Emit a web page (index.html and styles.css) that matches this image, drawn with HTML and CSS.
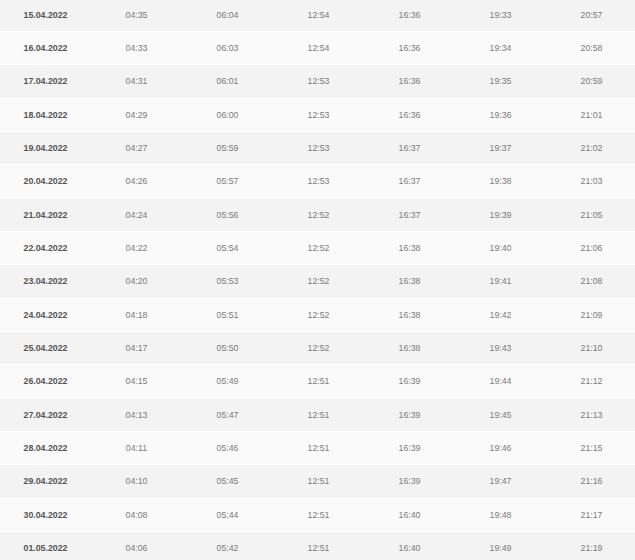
FILE: index.html
```html
<!DOCTYPE html>
<html lang="de">
<head>
<meta charset="utf-8">
<title>Gebetszeiten</title>
<link rel="stylesheet" href="styles.css">
</head>
<body>
<div class="table">
  <div class="row odd"><div class="date">15.04.2022</div><div>04:35</div><div>06:04</div><div>12:54</div><div>16:36</div><div>19:33</div><div>20:57</div></div>
  <div class="row even"><div class="date">16.04.2022</div><div>04:33</div><div>06:03</div><div>12:54</div><div>16:36</div><div>19:34</div><div>20:58</div></div>
  <div class="row odd"><div class="date">17.04.2022</div><div>04:31</div><div>06:01</div><div>12:53</div><div>16:36</div><div>19:35</div><div>20:59</div></div>
  <div class="row even"><div class="date">18.04.2022</div><div>04:29</div><div>06:00</div><div>12:53</div><div>16:36</div><div>19:36</div><div>21:01</div></div>
  <div class="row odd"><div class="date">19.04.2022</div><div>04:27</div><div>05:59</div><div>12:53</div><div>16:37</div><div>19:37</div><div>21:02</div></div>
  <div class="row even"><div class="date">20.04.2022</div><div>04:26</div><div>05:57</div><div>12:53</div><div>16:37</div><div>19:38</div><div>21:03</div></div>
  <div class="row odd"><div class="date">21.04.2022</div><div>04:24</div><div>05:56</div><div>12:52</div><div>16:37</div><div>19:39</div><div>21:05</div></div>
  <div class="row even"><div class="date">22.04.2022</div><div>04:22</div><div>05:54</div><div>12:52</div><div>16:38</div><div>19:40</div><div>21:06</div></div>
  <div class="row odd"><div class="date">23.04.2022</div><div>04:20</div><div>05:53</div><div>12:52</div><div>16:38</div><div>19:41</div><div>21:08</div></div>
  <div class="row even"><div class="date">24.04.2022</div><div>04:18</div><div>05:51</div><div>12:52</div><div>16:38</div><div>19:42</div><div>21:09</div></div>
  <div class="row odd"><div class="date">25.04.2022</div><div>04:17</div><div>05:50</div><div>12:52</div><div>16:38</div><div>19:43</div><div>21:10</div></div>
  <div class="row even"><div class="date">26.04.2022</div><div>04:15</div><div>05:49</div><div>12:51</div><div>16:39</div><div>19:44</div><div>21:12</div></div>
  <div class="row odd"><div class="date">27.04.2022</div><div>04:13</div><div>05:47</div><div>12:51</div><div>16:39</div><div>19:45</div><div>21:13</div></div>
  <div class="row even"><div class="date">28.04.2022</div><div>04:11</div><div>05:46</div><div>12:51</div><div>16:39</div><div>19:46</div><div>21:15</div></div>
  <div class="row odd"><div class="date">29.04.2022</div><div>04:10</div><div>05:45</div><div>12:51</div><div>16:39</div><div>19:47</div><div>21:16</div></div>
  <div class="row even"><div class="date">30.04.2022</div><div>04:08</div><div>05:44</div><div>12:51</div><div>16:40</div><div>19:48</div><div>21:17</div></div>
  <div class="row odd"><div class="date">01.05.2022</div><div>04:06</div><div>05:42</div><div>12:51</div><div>16:40</div><div>19:49</div><div>21:19</div></div>
</div>
</body>
</html>
```

FILE: styles.css
```css
html, body {
  margin: 0;
  padding: 0;
  background: #ffffff;
  overflow: hidden;
}
body {
  font-family: "Liberation Sans", Arial, Helvetica, sans-serif;
  font-size: 8.8px;
  color: #7a7a7a;
}
.table {
  width: 637px;
  margin-top: -1.4px;
  border-left: 1px solid #ececec;
  box-sizing: border-box;
}
.row {
  display: grid;
  grid-template-columns: repeat(7, 91px);
  height: 33.33px;
  align-items: center;
  text-align: center;
  border-bottom: 1px solid #ffffff;
  box-sizing: border-box;
  margin-left: -1px;
}
.row.odd { background: #f3f3f3; }
.row.even { background: #fafafa; }
.date {
  font-weight: bold;
  color: #555555;
}
```
